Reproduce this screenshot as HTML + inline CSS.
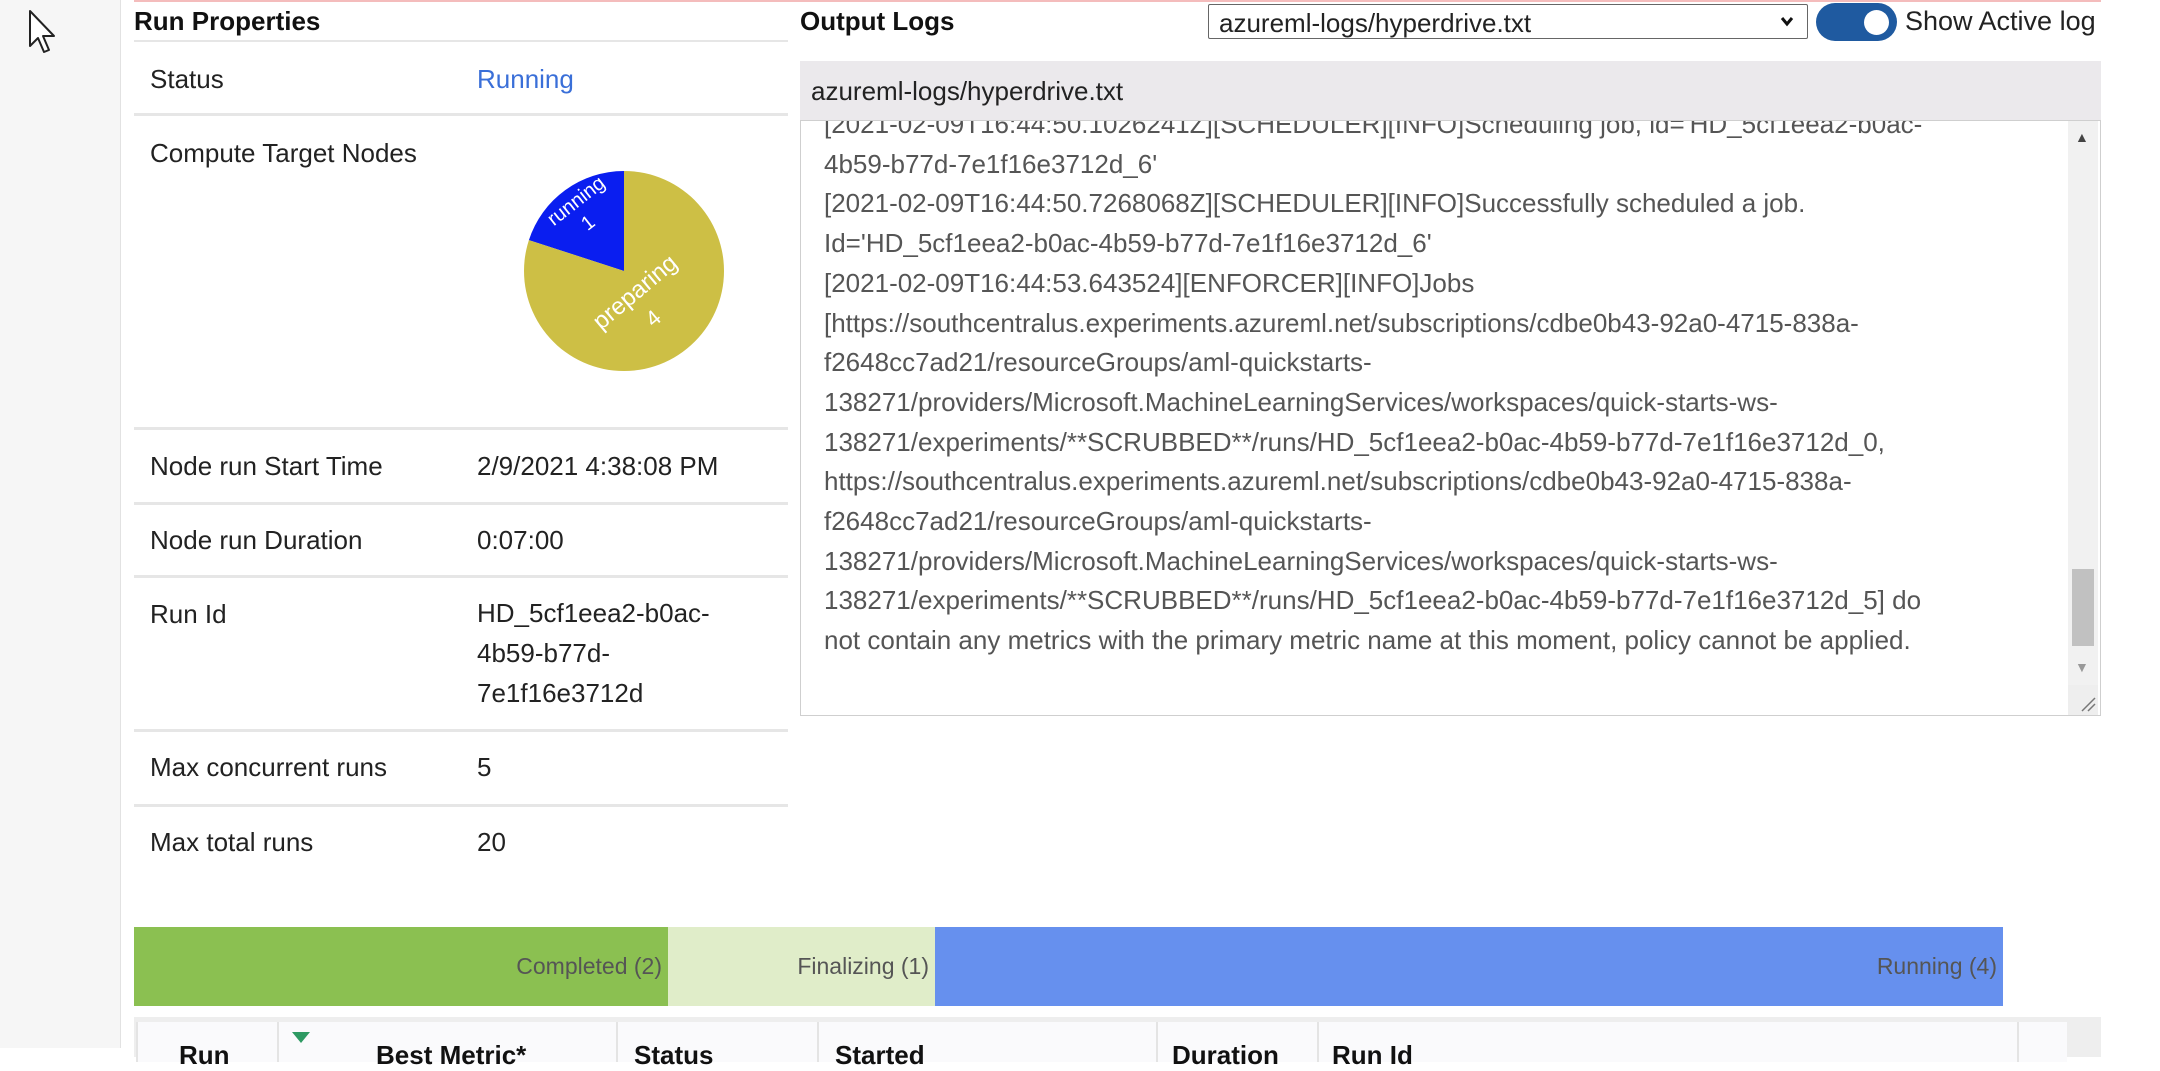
<!DOCTYPE html>
<html><head><meta charset="utf-8"><style>
*{margin:0;padding:0;box-sizing:border-box}
body{width:2160px;height:1048px;overflow:hidden;background:#fff;font-family:"Liberation Sans",Arial,sans-serif;color:#222;position:relative}
.abs{position:absolute}
.side{left:0;top:0;width:121px;height:1048px;background:#f6f6f6;border-right:1px solid #e2e2e2}
.h{font-weight:bold;font-size:26px;color:#111}
.lbl{font-size:26px;color:#222;white-space:nowrap}
.sep{height:3px;background:#e6e6e6;left:134px;width:654px}
.log{left:800px;top:120px;width:1301px;height:596px;border:1px solid #cfcfcf;overflow:hidden;background:#fff}
.lines{position:absolute;left:23px;top:-16px;font-size:26px;line-height:39.7px;color:#555;white-space:nowrap}
.pb{top:927px;height:79px;font-size:23px;color:#555;text-align:right;line-height:79px;padding-right:6px}
.th{top:1022px;height:40px;border-left:2px solid #e4e4e4;background:#fafafc}
.tht{top:1040px;font-size:26px;font-weight:bold;color:#111;white-space:nowrap}
</style></head><body>
<div class="abs side"></div>
<svg class="abs" style="left:26px;top:8px" width="34" height="48" viewBox="0 0 34 48"><path d="M4 3 L4 38 L12 30 L18 44 L23 42 L17 28 L28 28 Z" fill="#fff" stroke="#222" stroke-width="2" stroke-linejoin="round"/></svg>
<div class="abs" style="left:134px;top:0;width:1967px;height:2px;background:#f4bcbc"></div>

<div class="abs h" style="left:134px;top:6px">Run Properties</div>
<div class="abs sep" style="top:40px;height:2px"></div>
<div class="abs lbl" style="left:150px;top:64px">Status</div>
<div class="abs lbl" style="left:477px;top:64px;color:#3a6fd8">Running</div>
<div class="abs sep" style="top:113px"></div>
<div class="abs lbl" style="left:150px;top:138px">Compute Target Nodes</div>
<svg class="abs" style="left:0;top:0" width="800" height="420">
<path d="M624,271 L624,171 A100,100 0 0,0 528.9,240.1 Z" fill="#0a1ef0"/>
<path d="M624,271 L528.9,240.1 A100,100 0 1,0 624,171 Z" fill="#cdbf45"/>
<g fill="#fff" font-family="Liberation Sans,Arial,sans-serif" font-size="20" text-anchor="middle">
<text transform="translate(580,206) rotate(-38)">running</text>
<text transform="translate(592,228) rotate(-38)">1</text>
<text transform="translate(640,298) rotate(-40)" font-size="24">preparing</text>
<text transform="translate(658,324) rotate(-40)" font-size="22">4</text>
</g></svg>
<div class="abs sep" style="top:427px"></div>
<div class="abs lbl" style="left:150px;top:451px">Node run Start Time</div>
<div class="abs lbl" style="left:477px;top:451px">2/9/2021 4:38:08 PM</div>
<div class="abs sep" style="top:502px"></div>
<div class="abs lbl" style="left:150px;top:525px">Node run Duration</div>
<div class="abs lbl" style="left:477px;top:525px">0:07:00</div>
<div class="abs sep" style="top:575px"></div>
<div class="abs lbl" style="left:150px;top:599px">Run Id</div>
<div class="abs lbl" style="left:477px;top:599px;line-height:40px;margin-top:-6px">HD_5cf1eea2-b0ac-<br>4b59-b77d-<br>7e1f16e3712d</div>
<div class="abs sep" style="top:729px"></div>
<div class="abs lbl" style="left:150px;top:752px">Max concurrent runs</div>
<div class="abs lbl" style="left:477px;top:752px">5</div>
<div class="abs sep" style="top:804px"></div>
<div class="abs lbl" style="left:150px;top:827px">Max total runs</div>
<div class="abs lbl" style="left:477px;top:827px">20</div>

<div class="abs h" style="left:800px;top:6px">Output Logs</div>
<div class="abs" style="left:1208px;top:4px;width:600px;height:35px;border:1px solid #666;border-radius:2px;font-size:26px;padding:3px 0 0 10px;white-space:nowrap">azureml-logs/hyperdrive.txt</div>
<svg class="abs" style="left:1780px;top:16px" width="14" height="12"><path d="M2 2 L7 8 L12 2" fill="none" stroke="#111" stroke-width="3"/></svg>
<div class="abs" style="left:1816px;top:3px;width:81px;height:38px;border-radius:19px;background:#1f5aa0"></div>
<div class="abs" style="left:1864px;top:10px;width:25px;height:25px;border-radius:50%;background:#fff"></div>
<div class="abs lbl" style="left:1905px;top:6px;font-size:27px">Show Active log</div>

<div class="abs" style="left:800px;top:61px;width:1301px;height:59px;background:#ebe9ec;font-size:26px;padding:15px 0 0 11px;white-space:nowrap">azureml-logs/hyperdrive.txt</div>
<div class="abs log"><div class="lines">[2021-02-09T16:44:50.1026241Z][SCHEDULER][INFO]Scheduling job, id='HD_5cf1eea2-b0ac-<br>4b59-b77d-7e1f16e3712d_6'<br>[2021-02-09T16:44:50.7268068Z][SCHEDULER][INFO]Successfully scheduled a job.<br>Id='HD_5cf1eea2-b0ac-4b59-b77d-7e1f16e3712d_6'<br>[2021-02-09T16:44:53.643524][ENFORCER][INFO]Jobs<br>[https://southcentralus.experiments.azureml.net/subscriptions/cdbe0b43-92a0-4715-838a-<br>f2648cc7ad21/resourceGroups/aml-quickstarts-<br>138271/providers/Microsoft.MachineLearningServices/workspaces/quick-starts-ws-<br>138271/experiments/**SCRUBBED**/runs/HD_5cf1eea2-b0ac-4b59-b77d-7e1f16e3712d_0,<br>https://southcentralus.experiments.azureml.net/subscriptions/cdbe0b43-92a0-4715-838a-<br>f2648cc7ad21/resourceGroups/aml-quickstarts-<br>138271/providers/Microsoft.MachineLearningServices/workspaces/quick-starts-ws-<br>138271/experiments/**SCRUBBED**/runs/HD_5cf1eea2-b0ac-4b59-b77d-7e1f16e3712d_5] do<br>not contain any metrics with the primary metric name at this moment, policy cannot be applied.</div>
<div class="abs" style="left:1267px;top:0;width:30px;height:564px;background:#f1f1f1"></div>
<div class="abs" style="left:1271px;top:448px;width:22px;height:77px;background:#c1c1c1"></div>
<div class="abs" style="left:1274px;top:8px;font-size:14px;color:#444">▲</div>
<div class="abs" style="left:1274px;top:538px;font-size:14px;color:#999">▼</div>
<div class="abs" style="left:1267px;top:564px;width:30px;height:30px;background:#eee"></div>
<svg class="abs" style="left:1279px;top:575px" width="16" height="16"><path d="M2 15 L15 2 M8 15 L15 8" stroke="#777" stroke-width="1.5"/></svg>
</div>

<div class="abs pb" style="left:134px;width:534px;background:#8bc051">Completed (2)</div>
<div class="abs pb" style="left:668px;width:267px;background:#e0edc9">Finalizing (1)</div>
<div class="abs pb" style="left:935px;width:1068px;background:#6690ee">Running (4)</div>

<div class="abs" style="left:134px;top:1017px;width:1967px;height:40px;background:#eeeeee"></div>
<div class="abs th" style="left:136px;width:141px"></div>
<div class="abs th" style="left:277px;width:339px"></div>
<div class="abs th" style="left:616px;width:201px"></div>
<div class="abs th" style="left:817px;width:339px"></div>
<div class="abs th" style="left:1156px;width:161px"></div>
<div class="abs th" style="left:1317px;width:700px"></div>
<div class="abs th" style="left:2017px;width:50px"></div>
<svg class="abs" style="left:292px;top:1032px" width="18" height="12"><path d="M0 0 L18 0 L9 11 Z" fill="#2e9a63"/></svg>
<div class="abs tht" style="left:179px">Run</div>
<div class="abs tht" style="left:376px">Best Metric*</div>
<div class="abs tht" style="left:634px">Status</div>
<div class="abs tht" style="left:835px">Started</div>
<div class="abs tht" style="left:1172px">Duration</div>
<div class="abs tht" style="left:1332px">Run Id</div>
</body></html>
